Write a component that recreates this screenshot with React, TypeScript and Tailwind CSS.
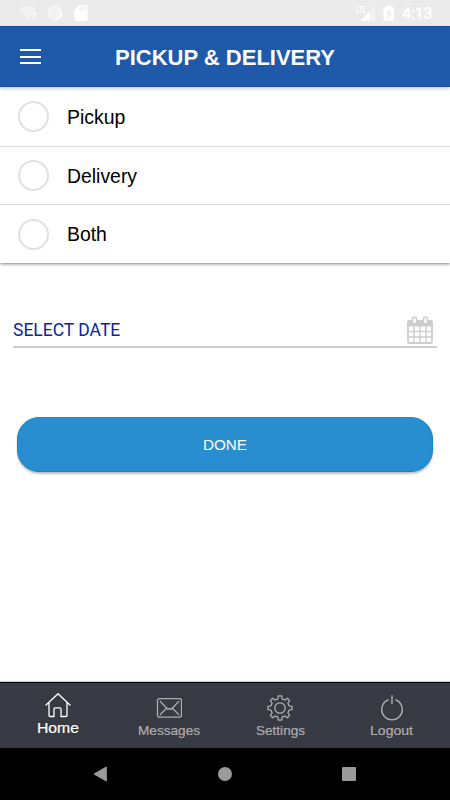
import { useState } from 'react'

const options = ['Pickup', 'Delivery', 'Both']

// outline of the eight-toothed cog, centred on 13,13
function cogPath() {
    const points: string[] = []
    for (let i = 0; i < 8; i++) {
        const base = i * 45 - 90
        const steps = [[-16, 9.2], [-11, 10], [-8, 12.2], [8, 12.2], [11, 10], [16, 9.2]]
        steps.forEach(([offset, r]) => {
            const a = ((base + offset) * Math.PI) / 180
            points.push(`${(13 + r * Math.cos(a)).toFixed(2)} ${(13 + r * Math.sin(a)).toFixed(2)}`)
        })
    }
    return `M${points.join('L')}Z`
}

function StatusBar() {
    return (
        <div className="h-[26px] shrink-0 bg-[#ebebeb] flex items-start text-white">
            <svg width="450" height="26" viewBox="0 0 450 26" fill="#fff">
                <path d="M19.5 9Q28 2.5 36.5 9L35 11H31v5l-3 4z" opacity=".38" />
                <text x="31" y="19.5" fontSize="11" fontWeight="700" fontFamily="Roboto, sans-serif">?</text>
                <circle cx="54.7" cy="12.7" r="7" opacity=".35" />
                <circle cx="54.7" cy="12.7" r="6.7" fill="none" stroke="#fff" strokeWidth="1.3" strokeDasharray="2 1" opacity=".7" />
                <path d="M56 19.3A6.7 6.7 0 0 0 61.3 12" fill="none" stroke="#fff" strokeWidth="1.6" />
                <path fillRule="evenodd" d="M79 5h7q1.5 0 1.5 1.5v13q0 1.5-1.5 1.5H76q-1.5 0-1.5-1.5V10zM79.3 7v3.2h1.5V7zm2.5 0v3.2h1.5V7zm2.5 0v3.2h1.5V7z" />
                <text x="355.5" y="12.7" fontSize="9.5" fontWeight="700" textLength="10.5" lengthAdjust="spacingAndGlyphs" fontFamily="Roboto, sans-serif">LTE</text>
                <path d="M367 14L375 6v15h-6z" opacity=".38" />
                <path d="M360 21l9.5-9.5V21z" />
                <path fillRule="evenodd" d="M387 5h4v2h2q1 0 1 1v12q0 1-1 1h-8.5q-1 0-1-1V8q0-1 1-1H387zM390 9l-4 5.5h2.2V19l4-5.5H390z" />
                <text x="402" y="19.3" fontSize="16.5" fontWeight="500" textLength="30.5" fontFamily="Roboto, sans-serif">4:13</text>
            </svg>
        </div>
    )
}

function TopBar() {
    return (
        <header className="h-[61px] shrink-0 bg-[#1e59aa] border-y border-[#164e9f] flex items-center pl-5 shadow-[0_2px_3px_rgba(0,0,0,0.2)] z-10">
            <button className="w-[21px] h-[15px] flex flex-col justify-between" aria-label="Menu">
                <span className="h-0.5 w-full bg-white" />
                <span className="h-0.5 w-full bg-white" />
                <span className="h-0.5 w-full bg-white" />
            </button>
            <h1 className="ml-[74px] pt-0.5 text-white font-bold text-[22px] leading-8 whitespace-nowrap">PICKUP &amp; DELIVERY</h1>
        </header>
    )
}

function Label({ text, width, size, baseline, className }: { text: string; width: number; size: number; baseline: number; className?: string }) {
    return (
        <svg width={width} height="18" viewBox={`0 0 ${width} 18`} className={className}>
            <text x="0" y={baseline} fontSize={size} fill="currentColor" stroke="currentColor" strokeWidth=".2" textLength={width} lengthAdjust="spacingAndGlyphs">{text}</text>
        </svg>
    )
}

function BottomTabs() {
    return (
        <nav className="h-[66px] shrink-0 bg-[#383a43] border-t border-black grid grid-cols-[116px_106px_116px_107px] shadow-[0_-1px_1px_rgba(0,0,0,0.2)]">
            <button className="flex flex-col items-center pt-2.5 text-white">
                <svg width="26" height="26" viewBox="0 0 26 26" fill="none" stroke="currentColor" strokeWidth="1.3" strokeLinejoin="round" strokeLinecap="round">
                    <path d="M1 12L13 .7 25 12M4 9.5v13q0 1 1 1h4V16q0-1.2 1.2-1.2h4.6Q16 14.8 16 16v7.5h5q1 0 1-1v-13" />
                </svg>
                <Label text="Home" width={42} size={15.3} baseline={15} className="-mt-px" />
            </button>
            <button className="flex flex-col items-center pt-3 text-[#adadaf]">
                <svg width="26" height="26" viewBox="0 0 26 26" fill="none" stroke="currentColor" strokeWidth="1.3" strokeLinejoin="round" strokeLinecap="round">
                    <rect x="1.5" y="3.6" width="24" height="18.6" rx="1.8" />
                    <path d="M4.3 6.5L12 14.5l1.5-1.2 1.5 1.2 7.7-8M4.3 19.5l6.5-6.5m11.9 6.5L16.2 13" />
                </svg>
                <Label text="Messages" width={62} size={12.8} baseline={14} />
            </button>
            <button className="flex flex-col items-center pt-3 text-[#adadaf]">
                <svg width="26" height="26" viewBox="0 0 26 26" fill="none" stroke="currentColor" strokeWidth="1.3" strokeLinejoin="round">
                    <path d={cogPath()} />
                    <circle cx="13" cy="13" r="5.2" />
                </svg>
                <Label text="Settings" width={49} size={12.8} baseline={14} />
            </button>
            <button className="flex flex-col items-center pt-3 text-[#adadaf]">
                <svg width="26" height="26" viewBox="0 0 26 26" fill="none" stroke="currentColor" strokeWidth="1.4" strokeLinecap="round">
                    <path d="M9 5A10.3 10.3 0 1 0 17 5M13 .8v8" />
                </svg>
                <Label text="Logout" width={43} size={12.8} baseline={14} />
            </button>
        </nav>
    )
}

export default function App() {
    const [selected, setSelected] = useState('')

    return (
        <div className="w-[450px] h-[800px] bg-white flex flex-col overflow-hidden font-['Liberation_Sans',Arial,sans-serif]">
            <StatusBar />
            <TopBar />
            <main className="flex-1 flex flex-col">
                <div className="h-[176px] shrink-0 flex flex-col shadow-[0_1px_3px_rgba(0,0,0,0.5)]">
                    {options.map(option => (
                        <button key={option} onClick={() => setSelected(option)} className="h-[58px] first:h-[60px] flex items-center pl-[18px] border-b border-[#dddddd] last:border-b-0">
                            <span className="w-[31px] h-[31px] rounded-full border-2 border-[#e1e1e1] flex items-center justify-center">
                                {selected === option && <span className="w-4 h-4 rounded-full bg-[#1e59aa]" />}
                            </span>
                            <span className="ml-[18px] text-[19.4px] leading-6 text-black">{option}</span>
                        </button>
                    ))}
                </div>

                <div className="mt-[51px] mx-[13px] h-[34px] border-b-2 border-[#cdcdcd] flex items-center justify-between">
                    <span className="text-[17.5px] pt-px text-[#08279a] font-['Roboto',sans-serif]">SELECT DATE</span>
                    <svg width="26" height="28" viewBox="0 0 26 28" className="mr-1" fill="none" stroke="#cdcdcd">
                        <rect x="1" y="5" width="24" height="22" rx="1.5" strokeWidth="1.8" />
                        <path d="M1 5h24v5H1z" fill="#cdcdcd" />
                        <path d="M7 10v17M13 10v17M19 10v17M1 15.5h24M1 21h24" strokeWidth="1.4" />
                        <rect x="5.5" y="1" width="4" height="7" rx="2" fill="#fff" strokeWidth="1.6" />
                        <rect x="16.5" y="1" width="4" height="7" rx="2" fill="#fff" strokeWidth="1.6" />
                    </svg>
                </div>

                <button className="mt-[69px] mx-[17px] h-[55px] pt-0.5 rounded-[22px] bg-[#288ed0] border border-[#1686ca] text-white text-[15.2px] shadow-[0_2px_2px_rgba(0,0,0,0.25)]">
                    DONE
                </button>
            </main>
            <BottomTabs />
            <div className="h-[52px] shrink-0 bg-black grid grid-cols-[163px_124px_163px] items-center">
                <svg width="14" height="16" viewBox="0 0 14 16" className="ml-[93px]" fill="#9a9a9a">
                    <path d="M13.3 1v14L1 8z" stroke="#9a9a9a" strokeLinejoin="round" />
                </svg>
                <span className="w-3.5 h-3.5 rounded-full bg-[#9a9a9a] justify-self-center" />
                <span className="w-3.5 h-3.5 rounded-[1px] bg-[#9a9a9a] ml-[55px]" />
            </div>
        </div>
    )
}
